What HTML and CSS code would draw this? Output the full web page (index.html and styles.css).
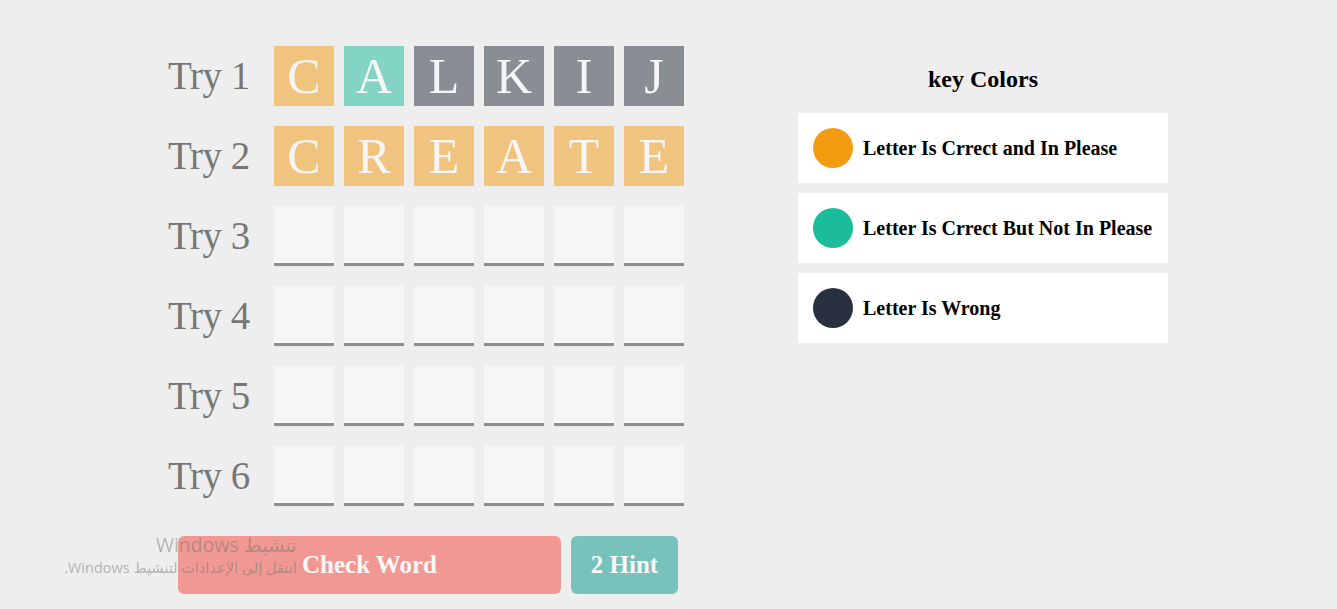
FILE: index.html
```html
<!DOCTYPE html>
<html lang="en">
<head>
<meta charset="utf-8">
<title>Guess The Word</title>
<link rel="stylesheet" href="styles.css">
</head>
<body>
<div class="page">
  <div class="game">
    <div class="tries">
      <div class="try disabled">
        <span class="label">Try 1</span>
        <div class="tiles">
          <div class="tile in-place">C</div>
          <div class="tile not-in-place">A</div>
          <div class="tile wrong">L</div>
          <div class="tile wrong">K</div>
          <div class="tile wrong">I</div>
          <div class="tile wrong">J</div>
        </div>
      </div>
      <div class="try disabled">
        <span class="label">Try 2</span>
        <div class="tiles">
          <div class="tile in-place">C</div>
          <div class="tile in-place">R</div>
          <div class="tile in-place">E</div>
          <div class="tile in-place">A</div>
          <div class="tile in-place">T</div>
          <div class="tile in-place">E</div>
        </div>
      </div>
      <div class="try disabled">
        <span class="label">Try 3</span>
        <div class="tiles">
          <div class="tile empty"></div><div class="tile empty"></div><div class="tile empty"></div>
          <div class="tile empty"></div><div class="tile empty"></div><div class="tile empty"></div>
        </div>
      </div>
      <div class="try disabled">
        <span class="label">Try 4</span>
        <div class="tiles">
          <div class="tile empty"></div><div class="tile empty"></div><div class="tile empty"></div>
          <div class="tile empty"></div><div class="tile empty"></div><div class="tile empty"></div>
        </div>
      </div>
      <div class="try disabled">
        <span class="label">Try 5</span>
        <div class="tiles">
          <div class="tile empty"></div><div class="tile empty"></div><div class="tile empty"></div>
          <div class="tile empty"></div><div class="tile empty"></div><div class="tile empty"></div>
        </div>
      </div>
      <div class="try disabled">
        <span class="label">Try 6</span>
        <div class="tiles">
          <div class="tile empty"></div><div class="tile empty"></div><div class="tile empty"></div>
          <div class="tile empty"></div><div class="tile empty"></div><div class="tile empty"></div>
        </div>
      </div>
    </div>
    <div class="controls">
      <button class="btn check">Check Word</button>
      <button class="btn hint">2 Hint</button>
    </div>
  </div>
  <div class="key">
    <h2 class="key-title">key Colors</h2>
    <div class="key-item"><span class="dot dot-in-place"></span><span class="key-text">Letter Is Crrect and In Please</span></div>
    <div class="key-item"><span class="dot dot-not-in-place"></span><span class="key-text">Letter Is Crrect But Not In Please</span></div>
    <div class="key-item"><span class="dot dot-wrong"></span><span class="key-text">Letter Is Wrong</span></div>
  </div>
</div>
<div class="activation" dir="rtl">
  <div class="act-title">تنشيط Windows</div>
  <div class="act-sub">انتقل إلى الإعدادات لتنشيط Windows.</div>
</div>
</body>
</html>
```

FILE: styles.css
```css
* { box-sizing: border-box; }

body {
  margin: 0;
  background: #eeeeee;
  font-family: "Liberation Serif", "Times New Roman", serif;
}

.page {
  display: flex;
  align-items: flex-start;
  padding: 46px 0 0 168px;
  gap: 114px;
}

.game {
  display: flex;
  flex-direction: column;
  width: 516px;
}

.tries {
  display: flex;
  flex-direction: column;
  gap: 20px;
}

.try {
  display: flex;
  align-items: center;
}

.try.disabled { opacity: 0.5; }

.label {
  width: 106px;
  font-size: 39px;
  letter-spacing: -0.5px;
  color: #000;
  line-height: 60px;
}

.tiles {
  display: flex;
  gap: 10px;
}

.tile {
  width: 60px;
  height: 60px;
  display: flex;
  align-items: center;
  justify-content: center;
  font-size: 50px;
  color: #fff;
  line-height: 1;
}

.tile.in-place { background: #f39c12; }
.tile.not-in-place { background: #1abc9c; }
.tile.wrong { background: #27303f; }
.tile.empty {
  background: #fff;
  border-bottom: 3px solid #333;
}

.controls {
  display: flex;
  gap: 10px;
  margin: 30px 0 0 10px;
}

.btn {
  height: 58px;
  border: none;
  border-radius: 6px;
  font-family: "Liberation Serif", "Times New Roman", serif;
  font-weight: bold;
  font-size: 25px;
  color: #f8f8f8;
  padding: 0;
}

.btn.check { width: 383px; background: #f19892; }
.btn.hint { width: 107px; background: #77c2bb; }

.key {
  width: 370px;
  margin-top: 19px;
}

.key-title {
  margin: 0 0 20px;
  text-align: center;
  font-size: 24px;
  line-height: 28px;
  font-weight: bold;
  color: #000;
}

.key-item {
  display: flex;
  align-items: center;
  height: 70px;
  padding: 0 15px;
  background: #fff;
  margin-bottom: 10px;
}

.dot {
  width: 40px;
  height: 40px;
  border-radius: 50%;
  margin-right: 10px;
  flex: none;
}

.dot-in-place { background: #f39c12; }
.dot-not-in-place { background: #1abc9c; }
.dot-wrong { background: #27303f; }

.key-text {
  font-size: 20px;
  font-weight: bold;
  color: #000;
}

.activation {
  position: fixed;
  left: 40px;
  top: 532px;
  width: 257px;
  text-align: right;
  color: rgba(120, 120, 120, 0.5);
  font-family: "Open Sans", "DejaVu Sans", sans-serif;
  pointer-events: none;
}

.act-title {
  font-size: 19.5px;
  line-height: 26px;
}

.act-sub {
  font-size: 14.5px;
  line-height: 20px;
}
```
